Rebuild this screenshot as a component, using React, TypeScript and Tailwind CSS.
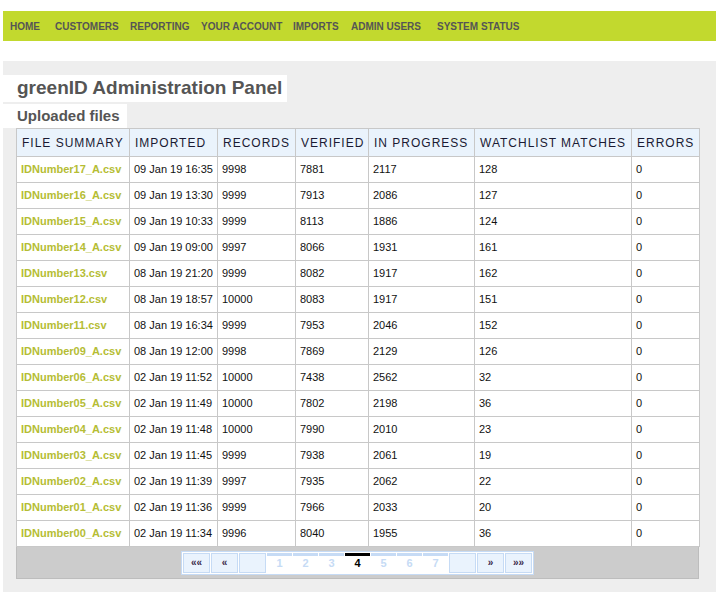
const navItems = [
  { label: "HOME", w: "w-[45px]" },
  { label: "CUSTOMERS", w: "w-[75px]" },
  { label: "REPORTING", w: "w-[71px]" },
  { label: "YOUR ACCOUNT", w: "w-[92px]" },
  { label: "IMPORTS", w: "w-[58px]" },
  { label: "ADMIN USERS", w: "w-[86px]" },
  { label: "SYSTEM STATUS", w: "" },
];

const headers = ["FILE SUMMARY", "IMPORTED", "RECORDS", "VERIFIED", "IN PROGRESS", "WATCHLIST MATCHES", "ERRORS"];
const colWidths = ["w-[113px]", "w-[88px]", "w-[78px]", "w-[73px]", "w-[106px]", "w-[157px]", "w-[68px]"];

const rows = [
  ["IDNumber17_A.csv", "09 Jan 19 16:35", "9998", "7881", "2117", "128", "0"],
  ["IDNumber16_A.csv", "09 Jan 19 13:30", "9999", "7913", "2086", "127", "0"],
  ["IDNumber15_A.csv", "09 Jan 19 10:33", "9999", "8113", "1886", "124", "0"],
  ["IDNumber14_A.csv", "09 Jan 19 09:00", "9997", "8066", "1931", "161", "0"],
  ["IDNumber13.csv", "08 Jan 19 21:20", "9999", "8082", "1917", "162", "0"],
  ["IDNumber12.csv", "08 Jan 19 18:57", "10000", "8083", "1917", "151", "0"],
  ["IDNumber11.csv", "08 Jan 19 16:34", "9999", "7953", "2046", "152", "0"],
  ["IDNumber09_A.csv", "08 Jan 19 12:00", "9998", "7869", "2129", "126", "0"],
  ["IDNumber06_A.csv", "02 Jan 19 11:52", "10000", "7438", "2562", "32", "0"],
  ["IDNumber05_A.csv", "02 Jan 19 11:49", "10000", "7802", "2198", "36", "0"],
  ["IDNumber04_A.csv", "02 Jan 19 11:48", "10000", "7990", "2010", "23", "0"],
  ["IDNumber03_A.csv", "02 Jan 19 11:45", "9999", "7938", "2061", "19", "0"],
  ["IDNumber02_A.csv", "02 Jan 19 11:39", "9997", "7935", "2062", "22", "0"],
  ["IDNumber01_A.csv", "02 Jan 19 11:36", "9999", "7966", "2033", "20", "0"],
  ["IDNumber00_A.csv", "02 Jan 19 11:34", "9996", "8040", "1955", "36", "0"],
];

const pages = [1, 2, 3, 4, 5, 6, 7];

function NavButton({ label }: { label: string }) {
  return (
    <span className="flex h-[20px] w-[27px] items-center justify-center border border-[#c6dbf5] bg-[#eaf3fd] text-[10px] font-bold text-[#3a2a4a]">
      {label}
    </span>
  );
}

export default function App() {
  return (
    <div className="min-h-[592px] bg-white font-['Liberation_Sans',Arial,sans-serif] pt-[11px]">
      <nav className="ml-[3px] flex h-[30px] items-center bg-[#c2d92e] pl-[7px] text-[10px] font-bold text-[#555] whitespace-nowrap">
        {navItems.map((item) => (
          <span key={item.label} className={`shrink-0 ${item.w}`}>
            {item.label}
          </span>
        ))}
      </nav>

      <main className="ml-[3px] mt-[20px] h-[531px] bg-[#eeeeee] pt-[14px]">
        <div className="flex h-[27px] w-[284px] items-center bg-white pl-[14px] text-[19px] font-bold text-[#555] whitespace-nowrap">
          greenID Administration Panel
        </div>
        <div className="mt-[2px] flex h-[24px] w-[124px] items-center bg-white pl-[14px] text-[15px] font-bold text-[#555] whitespace-nowrap">
          Uploaded files
        </div>

        <div className="ml-[13px] w-[683px]">
          <table className="w-full table-fixed border-collapse text-[11px] text-[#111]">
            <colgroup>
              {colWidths.map((w, i) => (
                <col key={i} className={w} />
              ))}
            </colgroup>
            <thead>
              <tr className="h-[28px] bg-[#eaf3fc]">
                {headers.map((h) => (
                  <th
                    key={h}
                    className="border border-[#c8c8c8] px-[5px] text-left text-[12px] font-normal tracking-[1px] text-[#1a1a33] whitespace-nowrap"
                  >
                    {h}
                  </th>
                ))}
              </tr>
            </thead>
            <tbody>
              {rows.map((r) => (
                <tr key={r[0]} className="h-[26px] bg-white">
                  {r.map((c, i) => (
                    <td
                      key={i}
                      className={
                        i === 0
                          ? "border border-[#c8c8c8] px-[4px] font-bold text-[#b5bd34] whitespace-nowrap"
                          : "border border-[#c8c8c8] px-[4px] whitespace-nowrap"
                      }
                    >
                      {c}
                    </td>
                  ))}
                </tr>
              ))}
            </tbody>
          </table>

          <div className="flex h-[32px] items-center justify-center border border-t-0 border-[#bdbdbd] bg-[#cccccc]">
            <div className="flex gap-px border border-[#c6dbf5] bg-white p-px">
              <NavButton label="««" />
              <NavButton label="«" />
              <span className="h-[20px] w-[27px] border border-[#c6dbf5] bg-[#eaf3fd]" />
              {pages.map((p) => (
                <span
                  key={p}
                  className={
                    p === 4
                      ? "flex h-[20px] w-[25px] items-center justify-center border-t-[3px] border-black pb-[1px] text-[11px] font-bold text-black"
                      : "flex h-[20px] w-[25px] items-center justify-center border-t-[3px] border-[#c6dbf5] pb-[1px] text-[11px] font-bold text-[#c6dbf5]"
                  }
                >
                  {p}
                </span>
              ))}
              <span className="h-[20px] w-[27px] border border-[#c6dbf5] bg-[#eaf3fd]" />
              <NavButton label="»" />
              <NavButton label="»»" />
            </div>
          </div>
        </div>
      </main>
    </div>
  );
}
